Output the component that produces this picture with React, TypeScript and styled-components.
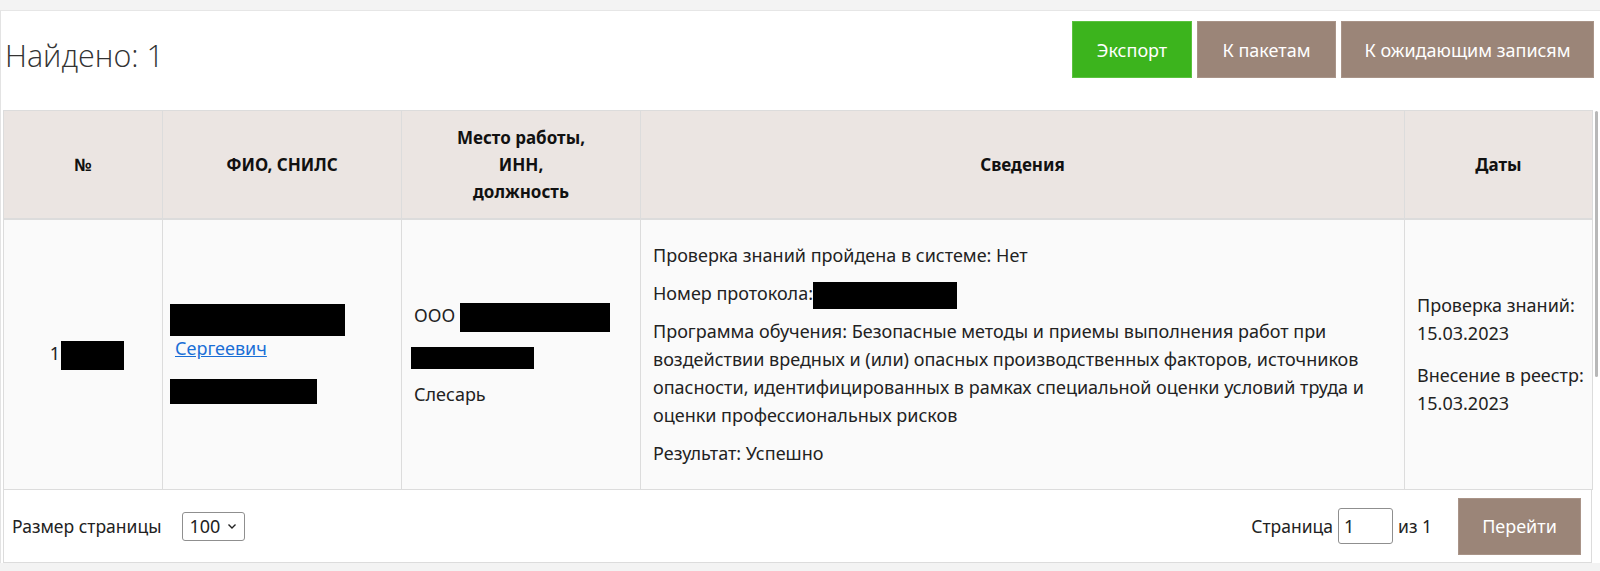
import React from "react";
import styled, { createGlobalStyle } from "styled-components";

const Global = createGlobalStyle`
  html, body { margin: 0; padding: 0; background: #f3f3f3; }
  body { font-family: "Noto Sans", "Open Sans", sans-serif; color: #222; }
  * { box-sizing: border-box; }
`;

const Page = styled.div`
  padding-top: 10px;
  height: 571px;
  background: #f3f3f3;
`;

const Panel = styled.div`
  position: relative;
  background: #fff;
  border-top: 1px solid #e6e6e6;
  border-left: 1px solid #e3e3e3;
  padding: 0 8px 0 2px;
`;

const TopBar = styled.div`
  display: flex;
  justify-content: space-between;
  align-items: flex-start;
  padding: 10px 0 32px 0;
`;

const Title = styled.h1`
  margin: 14px 0 0 2px;
  font-family: "Open Sans", sans-serif;
  font-weight: 300;
  font-size: 30.5px;
  line-height: 40px;
  color: #333;
`;

const Actions = styled.div`
  display: flex;
  gap: 5px;
  margin-right: -2px;
`;

const ActionButton = styled.button<{ $tone: "green" | "brown"; $w: number }>`
  height: 57px;
  width: ${(p) => p.$w}px;
  border: 1px solid ${(p) => (p.$tone === "green" ? "#5bc23f" : "#a99488")};
  background: ${(p) => (p.$tone === "green" ? "#3cb41d" : "#9b8578")};
  color: #fff;
  font-family: "Noto Sans", sans-serif;
  font-size: 18px;
  padding: 0;
  cursor: pointer;
`;

const Table = styled.table`
  border-collapse: collapse;
  table-layout: fixed;
  width: 1589px;
  border: 1px solid #dcdcdc;
`;

const Th = styled.th<{ $w: number }>`
  width: ${(p) => p.$w}px;
  height: 108px;
  background: #ebe5e2;
  border: 1px solid #dcdcdc;
  border-bottom: 2px solid #dcdcdc;
  font-family: "Noto Sans", sans-serif;
  font-weight: 700;
  font-size: 17px;
  line-height: 27px;
  color: #111;
  text-align: center;
  vertical-align: middle;
  padding: 0 10px;
`;

const Td = styled.td<{ $center?: boolean; $padL?: number; $padR?: number }>`
  height: 271px;
  background: #fafafa;
  border: 1px solid #dcdcdc;
  vertical-align: middle;
  text-align: ${(p) => (p.$center ? "center" : "left")};
  padding: 0 ${(p) => p.$padR ?? 12}px 0 ${(p) => p.$padL ?? 12}px;
  font-size: 18px;
  line-height: 28px;
  color: #222;
`;

const Para = styled.p<{ $gap?: number }>`
  margin: 0;
  white-space: normal;
  & + & { margin-top: ${(p) => p.$gap ?? 10}px; }
`;

const Redact = styled.span<{ $w: number; $h: number; $shift?: number; $trim?: number }>`
  display: inline-block;
  width: ${(p) => p.$w}px;
  height: ${(p) => p.$h}px;
  background: #000;
  vertical-align: middle;
  margin: -${(p) => p.$trim ?? 0}px 0 -${(p) => p.$trim ?? 0}px ${(p) => p.$shift ?? 0}px;
`;

const NameCell = styled.div`
  display: flex;
  flex-direction: column;
  align-items: flex-start;
  margin-left: -5px;
`;

const NameLink = styled.a`
  display: block;
  margin-left: 5px;
  line-height: 24px;
  color: #1a6fd6;
  text-decoration: underline;
`;

const BlockRedact = styled.div<{ $w: number; $h: number; $top?: number }>`
  width: ${(p) => p.$w}px;
  height: ${(p) => p.$h}px;
  margin-top: ${(p) => p.$top ?? 0}px;
  background: #000;
`;

const DateLine = styled.p`
  margin: 0;
  white-space: nowrap;
  & + & { margin-top: 14px; }
`;

const Footer = styled.div`
  display: flex;
  justify-content: space-between;
  align-items: center;
  height: 73px;
  width: 1589px;
  border: 1px solid #dcdcdc;
  border-top: none;
  padding: 0 10px 0 8px;
  font-family: "Noto Sans", sans-serif;
  font-size: 17.5px;
  color: #222;
`;

const Group = styled.div`
  display: flex;
  align-items: center;
`;

const PageSize = styled.div`
  display: flex;
  align-items: center;
  gap: 7px;
  height: 29px;
  margin-left: 21px;
  padding: 0 7px 0 6px;
  border: 1px solid #8f8f8f;
  border-radius: 3px;
  background: #fff;
  font-size: 18px;
`;

const PageInput = styled.input`
  width: 55px;
  height: 36px;
  margin: 0 5px;
  padding: 0 5px;
  border: 1px solid #8f8f8f;
  border-radius: 3px;
  font-family: "Noto Sans", sans-serif;
  font-size: 18px;
  color: #222;
`;

const GoButton = styled.button`
  width: 123px;
  height: 57px;
  margin-left: 26px;
  background: #9b8578;
  border: 1px solid #a99488;
  color: #fff;
  font-family: "Noto Sans", sans-serif;
  font-size: 18px;
`;

const ScrollThumb = styled.div`
  position: absolute;
  right: 2px;
  top: 100px;
  width: 3px;
  height: 266px;
  background: #b8b8b8;
  border-radius: 2px;
`;

const BottomBand = styled.div`
  height: 8px;
  background: #f3f3f3;
`;

export default function App() {
  return (
    <>
      <Global />
      <Page>
        <Panel>
          <TopBar>
            <Title>Найдено: 1</Title>
            <Actions>
              <ActionButton $tone="green" $w={120}>Экспорт</ActionButton>
              <ActionButton $tone="brown" $w={139}>К пакетам</ActionButton>
              <ActionButton $tone="brown" $w={253}>К ожидающим записям</ActionButton>
            </Actions>
          </TopBar>
          <Table>
            <thead>
              <tr>
                <Th $w={159}>№</Th>
                <Th $w={239}>ФИО, СНИЛС</Th>
                <Th $w={239}>
                  Место работы,
                  <br />
                  ИНН,
                  <br />
                  должность
                </Th>
                <Th $w={764}>Сведения</Th>
                <Th $w={188}>Даты</Th>
              </tr>
            </thead>
            <tbody>
              <tr>
                <Td $center $padL={20}>
                  1<Redact $w={63} $h={29} $shift={1} />
                </Td>
                <Td>
                  <NameCell>
                    <BlockRedact $w={175} $h={32} />
                    <NameLink href="#">Сергеевич</NameLink>
                    <BlockRedact $w={147} $h={25} $top={19} />
                  </NameCell>
                </Td>
                <Td>
                  <Para $gap={15}>
                    ООО <Redact $w={150} $h={29} />
                  </Para>
                  <Para $gap={15}>
                    <Redact $w={123} $h={22} $shift={-3} />
                  </Para>
                  <Para $gap={15}>Слесарь</Para>
                </Td>
                <Td>
                  <Para>Проверка знаний пройдена в системе: Нет</Para>
                  <Para>
                    Номер протокола:<Redact $w={144} $h={27} $trim={6} />
                  </Para>
                  <Para>
                    Программа обучения: Безопасные методы и приемы выполнения работ при
                    воздействии вредных и (или) опасных производственных факторов, источников
                    опасности, идентифицированных в рамках специальной оценки условий труда и
                    оценки профессиональных рисков
                  </Para>
                  <Para>Результат: Успешно</Para>
                </Td>
                <Td $padL={12} $padR={2}>
                  <DateLine>
                    Проверка знаний:
                    <br />
                    15.03.2023
                  </DateLine>
                  <DateLine>
                    Внесение в реестр:
                    <br />
                    15.03.2023
                  </DateLine>
                </Td>
              </tr>
            </tbody>
          </Table>
          <Footer>
            <Group>
              Размер страницы
              <PageSize>
                100
                <svg width="10" height="7" viewBox="0 0 10 7">
                  <path d="M1.5 1.5 L5 5 L8.5 1.5" fill="none" stroke="#222" strokeWidth="1.4" />
                </svg>
              </PageSize>
            </Group>
            <Group>
              Страница
              <PageInput defaultValue="1" />
              из 1
              <GoButton>Перейти</GoButton>
            </Group>
          </Footer>
          <ScrollThumb />
        </Panel>
        <BottomBand />
      </Page>
    </>
  );
}
